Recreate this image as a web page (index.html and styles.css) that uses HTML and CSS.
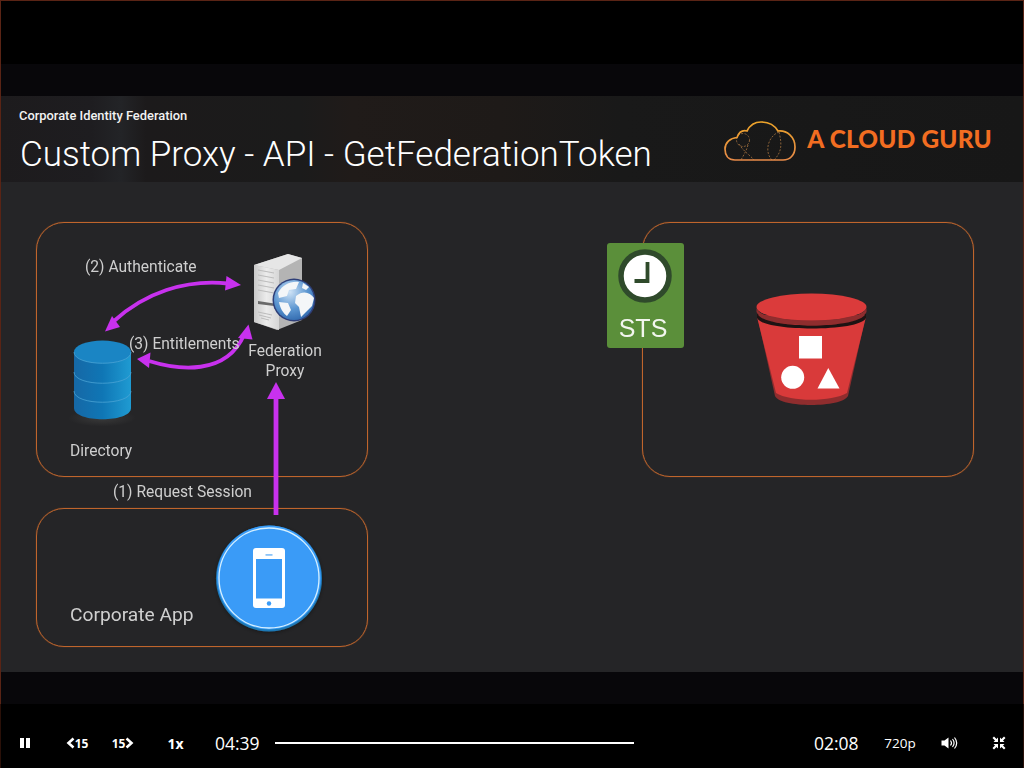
FILE: index.html
```html
<!DOCTYPE html>
<html lang="en">
<head>
<meta charset="utf-8">
<title>Custom Proxy - API - GetFederationToken</title>
<link rel="stylesheet" href="styles.css">
</head>
<body>
<main class="player">
  <section class="video">
    <div class="letterbox"></div>
    <div class="band"></div>
    <header class="slide-head">
      <div class="head-text">
        <p class="kicker">Corporate Identity Federation</p>
        <h1 class="title">Custom Proxy - API - GetFederationToken</h1>
      </div>
      <div class="logo">
        <svg class="logo-cloud" viewBox="723 117 75 44" width="75" height="44" aria-hidden="true">
          <defs>
            <linearGradient id="cloudStroke" x1="0" y1="0" x2="0" y2="1">
              <stop offset="0" stop-color="#eda42a"/>
              <stop offset="1" stop-color="#e68a48"/>
            </linearGradient>
          </defs>
          <g fill="none" stroke="#8b6238" stroke-width="1" stroke-dasharray="2 1.5">
            <circle cx="743" cy="138" r="6.5"/>
            <path d="M739 142 C744 150 750 153 754 158"/>
            <path d="M748 143 C746 150 743 154 741 158"/>
            <path d="M779 130 C768 134 764 150 772 158"/>
            <path d="M779 130 C782 142 782 150 774 158"/>
          </g>
          <path d="M735 158 C728 158 725 153 725 147 C725 141 730 136 737 135.500 C739 130 743 128 747 129 C750 123 755 120 761 120 C769 120 775 124 778 129 C787 128 795 135 795 145 C795 153 790 158 783 158 Z" fill="none" stroke="url(#cloudStroke)" stroke-width="1.700"/>
        </svg>
        <span class="logo-word">A CLOUD GURU</span>
      </div>
    </header>
    <div class="slide">
      <div class="group group-a"></div>
      <div class="group group-b"></div>
      <div class="group group-c"></div>

      <svg class="node node-server" viewBox="250 252 70 80" aria-hidden="true">
        <defs>
          <linearGradient id="srvFront" x1="0" y1="0" x2="1" y2="0">
            <stop offset="0" stop-color="#c9c9c9"/>
            <stop offset="0.5" stop-color="#ececec"/>
            <stop offset="1" stop-color="#d6d6d6"/>
          </linearGradient>
          <radialGradient id="globeFill" cx="0.4" cy="0.3" r="0.8">
            <stop offset="0" stop-color="#cfe3f6"/>
            <stop offset="0.55" stop-color="#5b95d0"/>
            <stop offset="1" stop-color="#2a62a8"/>
          </radialGradient>
        </defs>
        <path d="M254 265 L288 254 L302 258 L302 320 L277 330 L254 322 Z" fill="#b4b4b4"/>
        <path d="M254 265 L288 254 L302 258 L279 270 Z" fill="#e6e6e6"/>
        <path d="M254 265 L279 270 L279 330 L254 322 Z" fill="url(#srvFront)"/>
        <g fill="none" stroke="#bcbcbc" stroke-width="1">
          <path d="M258 270 L274 273 M258 275 L274 278 M258 280 L274 283 M258 285 L274 288 M258 290 L274 293"/>
          <path d="M258 312 L272 315 M259 315 L271 318 M261 318 L269 320"/>
        </g>
        <path d="M258 301 L274 303.500 L274 306 L258 304 Z" fill="#6a6a6a"/>
        <circle cx="294" cy="300" r="21.500" fill="#2f3f78"/>
        <circle cx="294" cy="300" r="20" fill="url(#globeFill)"/>
        <path d="M278 293 C283 284 291 281 299 282 L296 289 L289 290 L287 296 L279 298 Z M296 296 C303 290 310 292 314 298 L312 306 L306 312 L301 317 L299 307 L295 303 Z M279 302 L288 303 L291 310 L287 316 C283 313 280 308 279 302 Z M303 283 L309 287 L306 290 L302 288 Z" fill="#f4f6f8"/>
      </svg>

      <svg class="node node-db" viewBox="66 338 74 92" aria-hidden="true">
        <defs>
          <linearGradient id="dbBody" x1="0" y1="0" x2="1" y2="0">
            <stop offset="0" stop-color="#1668a6"/>
            <stop offset="0.5" stop-color="#0f76b5"/>
            <stop offset="1" stop-color="#1f9bd2"/>
          </linearGradient>
          <radialGradient id="dbShadow">
            <stop offset="0" stop-color="#3a3a3a"/>
            <stop offset="1" stop-color="#252527"/>
          </radialGradient>
        </defs>
        <ellipse cx="102" cy="418" rx="34" ry="8.500" fill="url(#dbShadow)"/>
        <path d="M74 352 L74 408 C74 423 131 423 131 408 L131 352 Z" fill="url(#dbBody)"/>
        <ellipse cx="102.500" cy="352" rx="28.500" ry="11.500" fill="#1a85c4"/>
        <g fill="none" stroke="#4aa3d4" stroke-width="0.800">
          <path d="M74 352 C74 367 131 367 131 352"/>
          <path d="M74 372 C74 387 131 387 131 372"/>
          <path d="M74 391 C74 406 131 406 131 391"/>
        </g>
      </svg>

      <svg class="node node-phone" viewBox="212 522 114 114" aria-hidden="true">
        <defs>
          <filter id="phoneGlow" x="-20%" y="-20%" width="140%" height="140%">
            <feDropShadow dx="0" dy="1" stdDeviation="2" flood-color="#000" flood-opacity="0.35"/>
          </filter>
        </defs>
        <circle cx="269" cy="578.500" r="53" fill="#1f79b6" filter="url(#phoneGlow)"/>
        <circle cx="269" cy="577.500" r="52" fill="#3a9bf7"/>
        <circle cx="269" cy="578" r="50" fill="none" stroke="#d5f0ff" stroke-width="1.300"/>
        <rect x="253" y="548" width="32" height="60" rx="3" fill="#fff"/>
        <rect x="256" y="559" width="26" height="39.500" fill="#3a9bf7"/>
        <circle cx="269" cy="603.500" r="2.200" fill="#3a9bf7"/>
        <rect x="265.500" y="554" width="7" height="1.800" fill="#8cc4f8"/>
      </svg>

      <div class="sts">
        <svg class="sts-clock" viewBox="0 0 54 54" width="54" height="54" aria-hidden="true">
          <circle cx="27" cy="27" r="24" fill="#fff" stroke="#2f4a2b" stroke-width="5.500"/>
          <path d="M29.500 13 L29.500 32 L16.500 32" fill="none" stroke="#2f4a2b" stroke-width="3.800"/>
        </svg>
        <span class="sts-label">STS</span>
      </div>

      <svg class="node node-bucket" viewBox="752 290 120 120" aria-hidden="true">
        <path d="M757 315 L775 396 C780 408 842 408 848 396 L866 315 Z" fill="#8f2d2e"/>
        <path d="M757 317 L776 393 C790 402 832 402 847 393 L866 317 C850 328 775 328 757 317 Z" fill="#d93a3a"/>
        <path d="M757 312 C757 330 866 330 866 312 L866 318 C860 332 763 332 757 318 Z" fill="#1d1313"/>
        <ellipse cx="811.500" cy="307" rx="55" ry="13.500" fill="#db3b3b"/>
        <path d="M756.500 308 C760 325 862 325 866.500 308 L866.500 312 C860 329 763 329 756.500 312 Z" fill="#8f2d2e"/>
        <rect x="799" y="336" width="23" height="22.500" fill="#fff"/>
        <circle cx="792.700" cy="377.300" r="11.500" fill="#fff"/>
        <path d="M828.300 368 L839.500 388.500 L817.500 388.500 Z" fill="#fff"/>
      </svg>

      <svg class="arrows" viewBox="1 182 1022 490" aria-hidden="true">
        <g fill="none" stroke="#c831ee" stroke-width="3.800">
          <path d="M114 321 C145 293 185 279 228 283.500"/>
          <path d="M149 361 C178 370 226 376 244 335"/>
          <path d="M276 398 L276 515" stroke-width="4.800"/>
        </g>
        <g fill="#c831ee">
          <path d="M105 331.500 L112 316 L120 327 Z"/>
          <path d="M241 285 L226.500 276 L225 290.500 Z"/>
          <path d="M137 359 L150.500 352.500 L149 368 Z"/>
          <path d="M248.500 324.500 L238 338 L252.500 339.500 Z"/>
          <path d="M276 382 L267 399 L285 399 Z"/>
        </g>
      </svg>

      <span class="label label-auth">(2) Authenticate</span>
      <span class="label label-ent">(3) Entitlements</span>
      <span class="label label-proxy">Federation<br>Proxy</span>
      <span class="label label-dir">Directory</span>
      <span class="label label-req">(1) Request Session</span>
      <span class="label label-app">Corporate App</span>
    </div>
    <div class="band"></div>
  </section>

  <nav class="controls">
    <button class="ctl ctl-pause" aria-label="Pause">
      <svg viewBox="0 0 12 12" width="12" height="12"><path d="M1 1h4v10H1zM7 1h4v10H7z" fill="#fff"/></svg>
    </button>
    <button class="ctl ctl-back" aria-label="Back 15 seconds">
      <svg viewBox="0 0 9 12" width="9" height="12"><path d="M7.500 1.500 L2.500 6 L7.500 10.500" fill="none" stroke="#fff" stroke-width="2.600"/></svg>
      <span>15</span>
    </button>
    <button class="ctl ctl-forward" aria-label="Forward 15 seconds">
      <span>15</span>
      <svg viewBox="0 0 9 12" width="9" height="12"><path d="M1.500 1.500 L6.500 6 L1.500 10.500" fill="none" stroke="#fff" stroke-width="2.600"/></svg>
    </button>
    <button class="ctl ctl-speed">1x</button>
    <span class="time time-elapsed">04:39</span>
    <div class="track"><div class="track-fill" style="width:68.5%"></div></div>
    <span class="time time-left">02:08</span>
    <button class="ctl ctl-quality">720p</button>
    <button class="ctl ctl-volume" aria-label="Volume">
      <svg viewBox="0 0 17 14" width="17" height="14"><path d="M0.500 4.500 H3.500 L7.500 1.500 V12.500 L3.500 9.500 H0.500 Z" fill="#fff"/><g fill="none" stroke="#fff" stroke-width="1.200"><path d="M9.500 4.500 C10.700 6 10.700 8 9.500 9.500"/><path d="M11.500 3 C13.500 5.500 13.500 8.500 11.500 11"/><path d="M13.500 1.500 C16.300 5 16.300 9 13.500 12.500"/></g></svg>
    </button>
    <button class="ctl ctl-exit" aria-label="Exit fullscreen">
      <svg viewBox="0 0 14 14" width="14" height="14"><g fill="#fff"><path d="M0.500 2 L2 0.500 L4.500 3 L6 1.500 V6 H1.500 L3 4.500 Z"/><path d="M13.500 2 L12 0.500 L9.500 3 L8 1.500 V6 H12.500 L11 4.500 Z"/><path d="M0.500 12 L2 13.500 L4.500 11 L6 12.500 V8 H1.500 L3 9.500 Z"/><path d="M13.500 12 L12 13.500 L9.500 11 L8 12.500 V8 H12.500 L11 9.500 Z"/></g></svg>
    </button>
  </nav>
</main>
</body>
</html>
```
FILE: styles.css
```css
* { box-sizing: border-box; }
html, body { margin: 0; padding: 0; background: #000; }
body { width: 1024px; height: 768px; overflow: hidden; font-family: Roboto, "Liberation Sans", sans-serif; }

.player { width: 1024px; height: 768px; display: flex; flex-direction: column; background: #000; }

.video {
  height: 704px;
  display: flex;
  flex-direction: column;
  border: 1px solid #5a2415;
  border-bottom: 0;
}
.letterbox { height: 63px; background: #000; }
.band { height: 32px; background: #08070a; }

.slide-head {
  height: 86px;
  padding: 12px 31px 0 18px;
  display: flex;
  justify-content: space-between;
  color: #fff;
  background: linear-gradient(90deg, #1d1b1d 0, #1e1d20 90px, #232427 120px, #1c1a1b 145px, #1b1b1b 300px, #201b19 350px, #1e1a18 500px, #191919 620px, #171717 1022px);
}
.kicker { margin: 0; font-size: 12.900px; line-height: 15px; font-weight: 500; color: #f2f2f2; }
.title { margin: 11px 0 0 1px; font-size: 35px; line-height: 42px; font-weight: 300; color: #fff; white-space: nowrap; }

.logo { display: flex; align-items: center; gap: 9px; height: 62px; margin-top: 1px; }
.logo-cloud { display: block; margin-top: 1px; }
.logo-word { font-family: Lato, sans-serif; font-weight: 900; font-size: 24.400px; color: #f26d21; letter-spacing: 0.2px; white-space: nowrap; margin-bottom: 3px; }

.slide { position: relative; height: 490px; background: #252527; color: #d0d0d0; filter: blur(0.4px); }

.group { position: absolute; width: 332px; border: 1px solid #c0652c; border-radius: 28px; box-shadow: 0 0 1px #b0602c; }
.group-a { left: 35px; top: 40px; height: 255px; }
.group-b { left: 641px; top: 40px; height: 255px; }
.group-c { left: 35px; top: 326px; height: 139px; }

.node { position: absolute; display: block; }
.node-server { left: 249px; top: 70px; width: 70px; height: 80px; }
.node-db { left: 65px; top: 156px; width: 74px; height: 92px; }
.node-phone { left: 211px; top: 340px; width: 114px; height: 114px; }
.node-bucket { left: 751px; top: 108px; width: 120px; height: 120px; }

.sts {
  position: absolute;
  left: 606px;
  top: 61px;
  width: 77px;
  height: 105px;
  padding-top: 6px;
  background: #5b8f3a;
  border-radius: 3px;
  display: flex;
  flex-direction: column;
  align-items: center;
}
.sts-clock { display: block; margin-left: -2px; }
.sts-label { font-family: "Liberation Sans", sans-serif; font-size: 25px; line-height: 30px; margin: 10px 0 0 -5px; color: #f2f6ee; }

.arrows { position: absolute; left: 0; top: 0; width: 1022px; height: 490px; display: block; }

.label { position: absolute; font-size: 15.600px; line-height: 20px; white-space: nowrap; color: #cfcfcf; }
.label-auth { left: 84px; top: 75px; }
.label-ent { left: 128px; top: 152px; }
.label-proxy { left: 234px; top: 159px; width: 100px; text-align: center; }
.label-dir { left: 69px; top: 259px; }
.label-req { left: 112px; top: 300px; }
.label-app { left: 69px; top: 421px; font-size: 19.200px; line-height: 24px; }

.controls {
  height: 64px;
  padding-top: 14px;
  display: flex;
  align-items: center;
  background: #000;
  border-left: 1px solid #2a1008;
  border-right: 1px solid #2a1008;
  color: #fff;
  font-family: "Open Sans", sans-serif;
}
.ctl {
  appearance: none;
  border: 0;
  padding: 0;
  background: none;
  color: inherit;
  font: inherit;
  display: flex;
  align-items: center;
  justify-content: center;
}
.ctl svg { display: block; }
.ctl-pause { margin-left: 18px; width: 12px; }
.ctl-back { margin-left: 34px; width: 24px; font-size: 12px; font-weight: 700; }
.ctl-forward { margin-left: 22px; width: 24px; font-size: 12px; font-weight: 700; }
.ctl-speed { margin-left: 32px; width: 17px; font-size: 14px; font-weight: 700; }
.time { font-size: 17.500px; line-height: 24px; width: 46px; }
.time-elapsed { margin-left: 31px; }
.track { margin-left: 14px; width: 524px; height: 2px; }
.track-fill { height: 2px; background: #fff; }
.time-left { margin-left: 15px; }
.ctl-quality { margin-left: 24px; width: 32px; font-size: 13.500px; }
.ctl-volume { margin-left: 25px; width: 17px; }
.ctl-exit { margin-left: 34px; width: 14px; }
```
